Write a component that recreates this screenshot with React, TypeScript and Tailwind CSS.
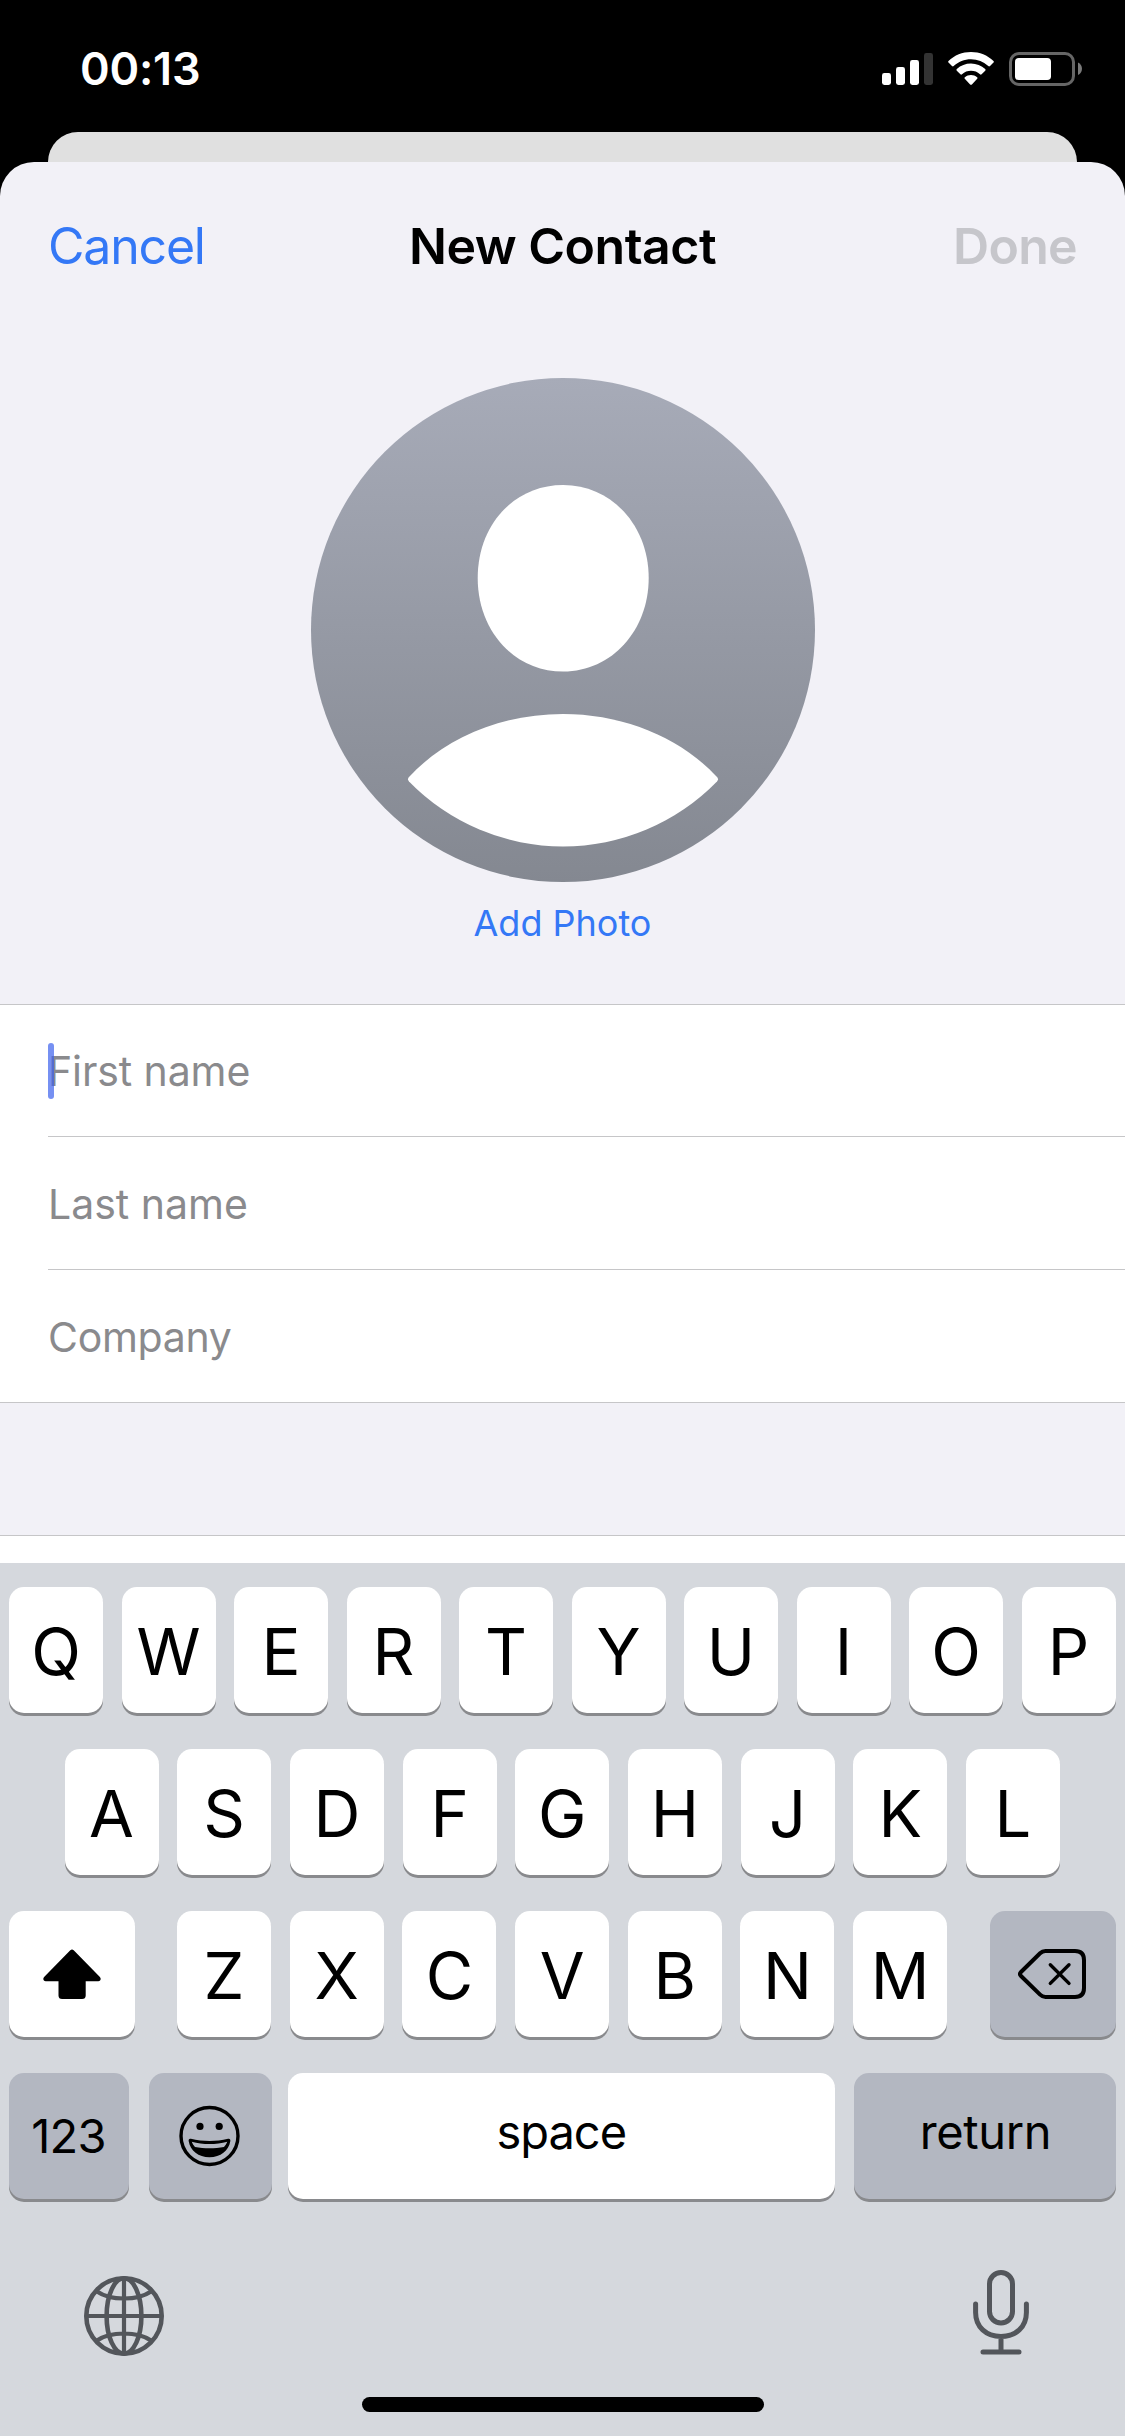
import type { ReactNode } from "react";

const KEY_BASE =
  "flex h-[126px] items-center justify-center rounded-[15px] shadow-[0_3px_0_#898a8d]";

function LetterKey({ label }: { label: string }) {
  return (
    <div className={`${KEY_BASE} w-[94px] bg-white pt-[3px]`}>
      <span className="text-[65px] leading-none">{label}</span>
    </div>
  );
}

function LetterRow({ letters, gap }: { letters: string; gap: string }) {
  return (
    <div className={`flex ${gap}`}>
      {letters.split("").map((l) => (
        <LetterKey key={l} label={l} />
      ))}
    </div>
  );
}

function FieldRow({
  label,
  className,
  last,
  children,
}: {
  label: string;
  className: string;
  last?: boolean;
  children?: ReactNode;
}) {
  return (
    <div className="pl-12">
      <div
        className={`relative flex items-center text-[41px] text-[#8a8a8d] ${className} ${
          last ? "" : "border-b border-[#c6c6c8]"
        }`}
      >
        {label}
        {children}
      </div>
    </div>
  );
}

function SignalIcon() {
  return (
    <svg width="51" height="34" viewBox="882 52 51 34" fill="#fff">
      <rect x="882" y="73" width="9" height="12" rx="2.4" />
      <rect x="896" y="67" width="9" height="18" rx="2.4" />
      <rect x="910" y="60" width="9" height="25" rx="2.4" />
      <rect x="924" y="53" width="9" height="32" rx="2.4" fill="#333" />
    </svg>
  );
}

function WifiIcon() {
  return (
    <svg width="46" height="34" viewBox="948 52 46 34" fill="#fff">
      <path d="M971 52c8.600 0 16.500 3.300 22.500 8.900.5.500.5 1.200 0 1.700l-3.500 3.500c-.5.500-1.200.5-1.700 0A25.200 25.200 0 0 0 971 59.200c-6.700 0-12.700 2.600-17.300 6.900-.5.500-1.200.5-1.700 0l-3.500-3.500c-.5-.5-.5-1.200 0-1.700C954.500 55.300 962.400 52 971 52Z" />
      <path d="M971 63.500c5.400 0 10.400 2.100 14.200 5.500.5.500.5 1.200 0 1.700l-3.600 3.600c-.5.500-1.100.5-1.600 0a13.500 13.500 0 0 0-18 0c-.5.500-1.100.5-1.600 0l-3.600-3.600c-.5-.5-.5-1.200 0-1.700a21.200 21.200 0 0 1 14.200-5.500Z" />
      <path d="M971 75c2.300 0 4.400.8 6.100 2.200.5.400.5 1.100.1 1.600l-5.300 5.600c-.5.500-1.300.5-1.800 0l-5.300-5.600c-.4-.5-.4-1.200.1-1.600 1.700-1.400 3.800-2.200 6.100-2.200Z" />
    </svg>
  );
}

function BatteryIcon() {
  return (
    <svg width="73" height="34" viewBox="1009 52 73 34">
      <rect x="1010.500" y="53.500" width="63" height="31" rx="8.500" fill="none" stroke="#666" strokeWidth="3" />
      <rect x="1015" y="58" width="36" height="22" rx="3.800" fill="#fff" />
      <path d="M1078 62.500c2.400 1 4 3.500 4 6.300s-1.600 5.300-4 6.300Z" fill="#7a7a7a" />
    </svg>
  );
}

function Avatar() {
  return (
    <svg width="504" height="504" viewBox="311 378 504 504">
      <defs>
        <linearGradient id="avatar-fill" x1="0" y1="0" x2="0" y2="1">
          <stop offset="0" stopColor="#a7abb8" />
          <stop offset="1" stopColor="#848891" />
        </linearGradient>
      </defs>
      <circle cx="563" cy="630" r="252" fill="url(#avatar-fill)" />
      <path
        d="M563.200 485C612 485 648.700 526 648.700 578S612 671.500 563.200 671.500 477.700 631 477.700 578 514 485 563.200 485Z"
        fill="#fff"
      />
      <path
        d="M409 777C446 737 503 714 563 714s117 23 154 63c1.300 1.500 1.300 2.900 0 4.500A215 215 0 0 1 409 781.500c-1.300-1.600-1.300-3 0-4.500Z"
        fill="#fff"
      />
    </svg>
  );
}

function ShiftIcon() {
  return (
    <svg width="58" height="51" viewBox="43.500 1949 58 51">
      <path d="M70.800 1950.200c1-.9 2.400-.9 3.400 0l26.200 26.800c1.600 1.900.6 4.200-1.600 4.200H86.200V1995.500c0 2.300-1.300 3.600-3.600 3.600H62.600c-2.300 0-3.600-1.300-3.600-3.600V1981.200H46.200c-2.200 0-3.200-2.300-1.600-4.200Z" />
    </svg>
  );
}

function BackspaceIcon() {
  return (
    <svg
      width="70"
      height="52"
      viewBox="1017 1948 70 52"
      fill="none"
      stroke="#000"
      strokeWidth="4"
      strokeLinecap="round"
      strokeLinejoin="round"
    >
      <path d="M1045.500 1951H1075c6 0 9 3 9 9v28c0 6-3 9-9 9H1045.500c-2.300 0-3.800-.7-5.400-2.300L1021 1976c-1.400-1.400-1.400-2.600 0-4l19.100-18.700c1.600-1.600 3.100-2.300 5.400-2.300Z" />
      <path d="M1050.300 1964.700l18.700 18.700M1069 1964.700l-18.700 18.700" strokeWidth="3.400" />
    </svg>
  );
}

function EmojiIcon() {
  return (
    <svg width="62" height="62" viewBox="179 2105 62 62">
      <circle cx="209.500" cy="2136" r="28.500" fill="none" stroke="#000" strokeWidth="3.400" />
      <circle cx="200" cy="2126.400" r="3.600" />
      <circle cx="219.200" cy="2126.400" r="3.600" />
      <path
        fillRule="evenodd"
        d="M190.900 2138.800c12.200 3 25 3 37.200 0 1.700-.4 2.500.6 2.200 2.400-1.700 9.600-9.700 16-20.800 16s-19.100-6.400-20.800-16c-.3-1.800.5-2.800 2.200-2.400Zm.8 2.900c.7 2 1.800 3.800 3.300 5.400 9.200 1.700 19.800 1.700 29 0 1.500-1.600 2.600-3.400 3.300-5.400-11.600 3.200-24 3.200-35.600 0Z"
      />
    </svg>
  );
}

function GlobeIcon() {
  return (
    <svg width="80" height="80" viewBox="84 2276 80 80" fill="none" stroke="#53565b" strokeWidth="4.600">
      <circle cx="124" cy="2316" r="37.700" />
      <ellipse cx="124" cy="2316" rx="17.400" ry="37.700" />
      <path
        d="M124 2278v76M86 2316h76M97 2291.500c6.500 4.500 16 7 27 7s20.500-2.500 27-7M97 2340.500c6.500-4.500 16-7 27-7s20.500 2.500 27 7"
        strokeWidth="4.200"
      />
    </svg>
  );
}

function MicIcon() {
  return (
    <svg
      width="56"
      height="85"
      viewBox="972.700 2270.500 56 85"
      fill="none"
      stroke="#53565b"
      strokeWidth="5"
      strokeLinecap="round"
    >
      <rect x="989.200" y="2273" width="23" height="50.500" rx="11.500" />
      <path d="M975.300 2304.500v8.500c0 14.500 10.500 24 25.400 24s25.400-9.500 25.400-24v-8.500M1000.700 2337v15.500M982.700 2352.500h36" />
    </svg>
  );
}

export default function App() {
  return (
    <div className="flex h-[2436px] w-[1125px] flex-col overflow-hidden bg-black font-['Inter',sans-serif] text-black">
      <header className="flex h-[132px] shrink-0 items-start justify-between pt-[52px] pr-[43px] pl-[80px]">
        <div className="text-[45px] leading-[34px] font-semibold tracking-[-0.200px] text-white">00:13</div>
        <div className="flex">
          <SignalIcon />
          <div className="ml-[15px]">
            <WifiIcon />
          </div>
          <div className="ml-[15px]">
            <BatteryIcon />
          </div>
        </div>
      </header>

      <div className="mx-12 h-[30px] shrink-0 rounded-t-[30px] bg-[#e0e0e0]" />

      <main className="flex h-[1401px] shrink-0 flex-col rounded-t-[34px] bg-[#f2f1f7]">
        <nav className="grid h-[168px] shrink-0 grid-cols-[1fr_auto_1fr] items-center px-12 text-[50px]">
          <span className="tracking-[-1.200px] text-[#3478f6]">Cancel</span>
          <span className="font-semibold tracking-[-0.500px]">New Contact</span>
          <span className="text-right font-semibold tracking-[-0.700px] text-[#c6c6cb]">Done</span>
        </nav>

        <section className="flex h-[674px] shrink-0 flex-col items-center pt-12">
          <Avatar />
          <div className="mt-[19px] text-[36px] leading-[44px] text-[#3478f6]">Add Photo</div>
        </section>

        <section className="shrink-0 border-y border-[#c6c6c8] bg-white">
          <FieldRow label="First name" className="h-[132px] pt-[2px] tracking-[-0.100px]">
            <span className="absolute top-[38px] left-0 h-14 w-1.5 rounded-full bg-[#3c61ec]/70" />
          </FieldRow>
          <FieldRow label="Last name" className="h-[133px] pt-[4px]" />
          <FieldRow label="Company" className="h-[132px] pt-[4px] tracking-[-0.300px]" last />
        </section>

        <div className="h-[132px] shrink-0" />
        <div className="flex-1 border-t border-[#c6c6c8] bg-white" />
      </main>

      <section className="flex h-[873px] shrink-0 flex-col bg-[#d5d8dd] px-[9px] pt-6">
        <div className="flex flex-col gap-9">
          <LetterRow letters="QWERTYUIOP" gap="gap-[18.500px]" />
          <div className="pl-[55.500px]">
            <LetterRow letters="ASDFGHJKL" gap="gap-[18.700px]" />
          </div>
          <div className="flex">
            <div className={`${KEY_BASE} mr-[42px] w-[126px] bg-white`}>
              <ShiftIcon />
            </div>
            <LetterRow letters="ZXCVBNM" gap="gap-[18.700px]" />
            <div className={`${KEY_BASE} ml-auto w-[126px] bg-[#b3b7c1] pr-[2px]`}>
              <BackspaceIcon />
            </div>
          </div>
          <div className="flex text-[47px] leading-none">
            <div className={`${KEY_BASE} w-[120px] bg-[#b3b7c1] pr-[1px] pb-[2px] tracking-[-0.800px]`}>123</div>
            <div className={`${KEY_BASE} ml-[19.500px] w-[123px] bg-[#b3b7c1]`}>
              <EmojiIcon />
            </div>
            <div className={`${KEY_BASE} ml-[16.500px] w-[546.500px] bg-white pb-[9px] tracking-[-1px]`}>space</div>
            <div className={`${KEY_BASE} ml-[19px] w-[262px] bg-[#b3b7c1] pb-[9px] pl-[2px] tracking-[-0.400px]`}>
              return
            </div>
          </div>
        </div>

        <div className="mt-[71px] flex items-start justify-between pr-[87px] pl-[75px]">
          <div className="pt-[6px]">
            <GlobeIcon />
          </div>
          <MicIcon />
        </div>

        <div className="mx-auto mt-[41px] h-[15px] w-[402px] rounded-full bg-black" />
      </section>
    </div>
  );
}
